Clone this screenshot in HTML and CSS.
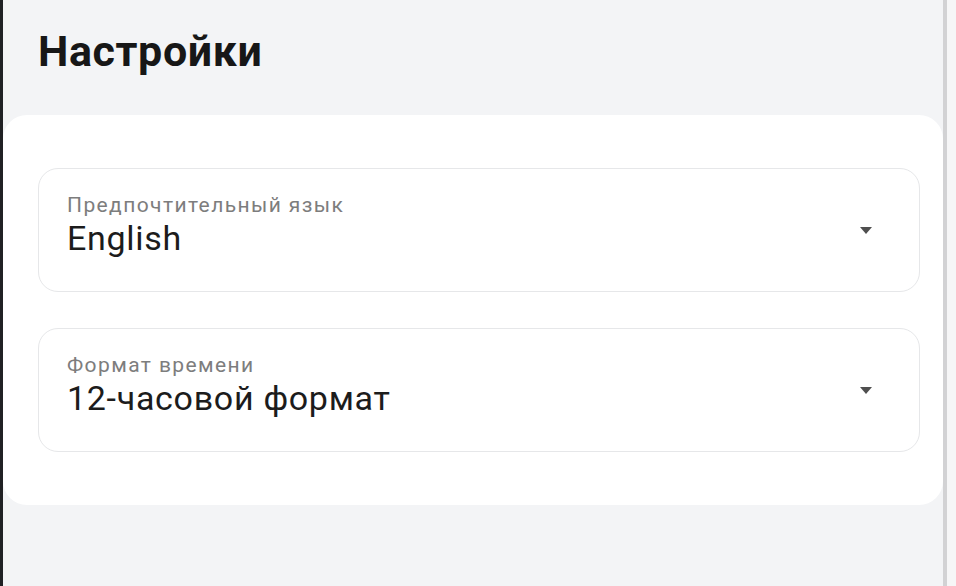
FILE: index.html
```html
<!DOCTYPE html>
<html lang="ru">
<head>
<meta charset="utf-8">
<title>Настройки</title>
<link rel="stylesheet" href="styles.css">
</head>
<body>
<div class="frame">
  <div class="edge-left"></div>
  <main class="main">
    <h1 class="title">Настройки</h1>
    <section class="card">
      <div class="field">
        <div class="field-text">
          <div class="label">Предпочтительный язык</div>
          <div class="value">English</div>
        </div>
        <span class="arrow"></span>
      </div>
      <div class="field">
        <div class="field-text">
          <div class="label">Формат времени</div>
          <div class="value">12-часовой формат</div>
        </div>
        <span class="arrow"></span>
      </div>
    </section>
  </main>
  <div class="edge-bar"></div>
  <div class="edge-right"></div>
</div>
</body>
</html>
```

FILE: styles.css
```css
html, body {
  margin: 0;
  padding: 0;
  height: 100%;
}
body {
  font-family: Roboto, "Noto Sans", "Liberation Sans", sans-serif;
  background: #f3f4f6;
  color: #1a1a1a;
}
.frame {
  display: flex;
  height: 586px;
  overflow: hidden;
}
.edge-left {
  width: 3px;
  background: #202124;
  flex: none;
}
.main {
  width: 940px;
  flex: none;
  background: #f3f4f6;
}
.title {
  margin: 0;
  padding: 26px 0 0 35px;
  font-size: 43px;
  line-height: 50px;
  font-weight: 700;
  color: #171717;
  letter-spacing: 0.6px;
}
.card {
  margin-top: 39px;
  background: #ffffff;
  border-radius: 24px;
  padding: 53px 23px 53px 35px;
  display: flex;
  flex-direction: column;
  gap: 36px;
}
.field {
  height: 124px;
  box-sizing: border-box;
  border: 1.5px solid #e6e7e9;
  border-radius: 20px;
  display: flex;
  align-items: center;
  padding: 0 47px 0 28px;
}
.field-text {
  flex: 1;
  margin-bottom: 11px;
}
.label {
  font-size: 21px;
  line-height: 26px;
  color: #7d7d7d;
  letter-spacing: 1.4px;
}
.value {
  font-size: 34px;
  line-height: 40px;
  color: #1c1c1c;
  letter-spacing: 0.7px;
}
.arrow {
  width: 0;
  height: 0;
  border-left: 6.5px solid transparent;
  border-right: 6.5px solid transparent;
  border-top: 7px solid #4f4f4f;
}
.edge-bar {
  width: 4px;
  flex: none;
  background: #d2d2d4;
}
.edge-right {
  flex: 1;
  background: #f6f6f7;
}
```
